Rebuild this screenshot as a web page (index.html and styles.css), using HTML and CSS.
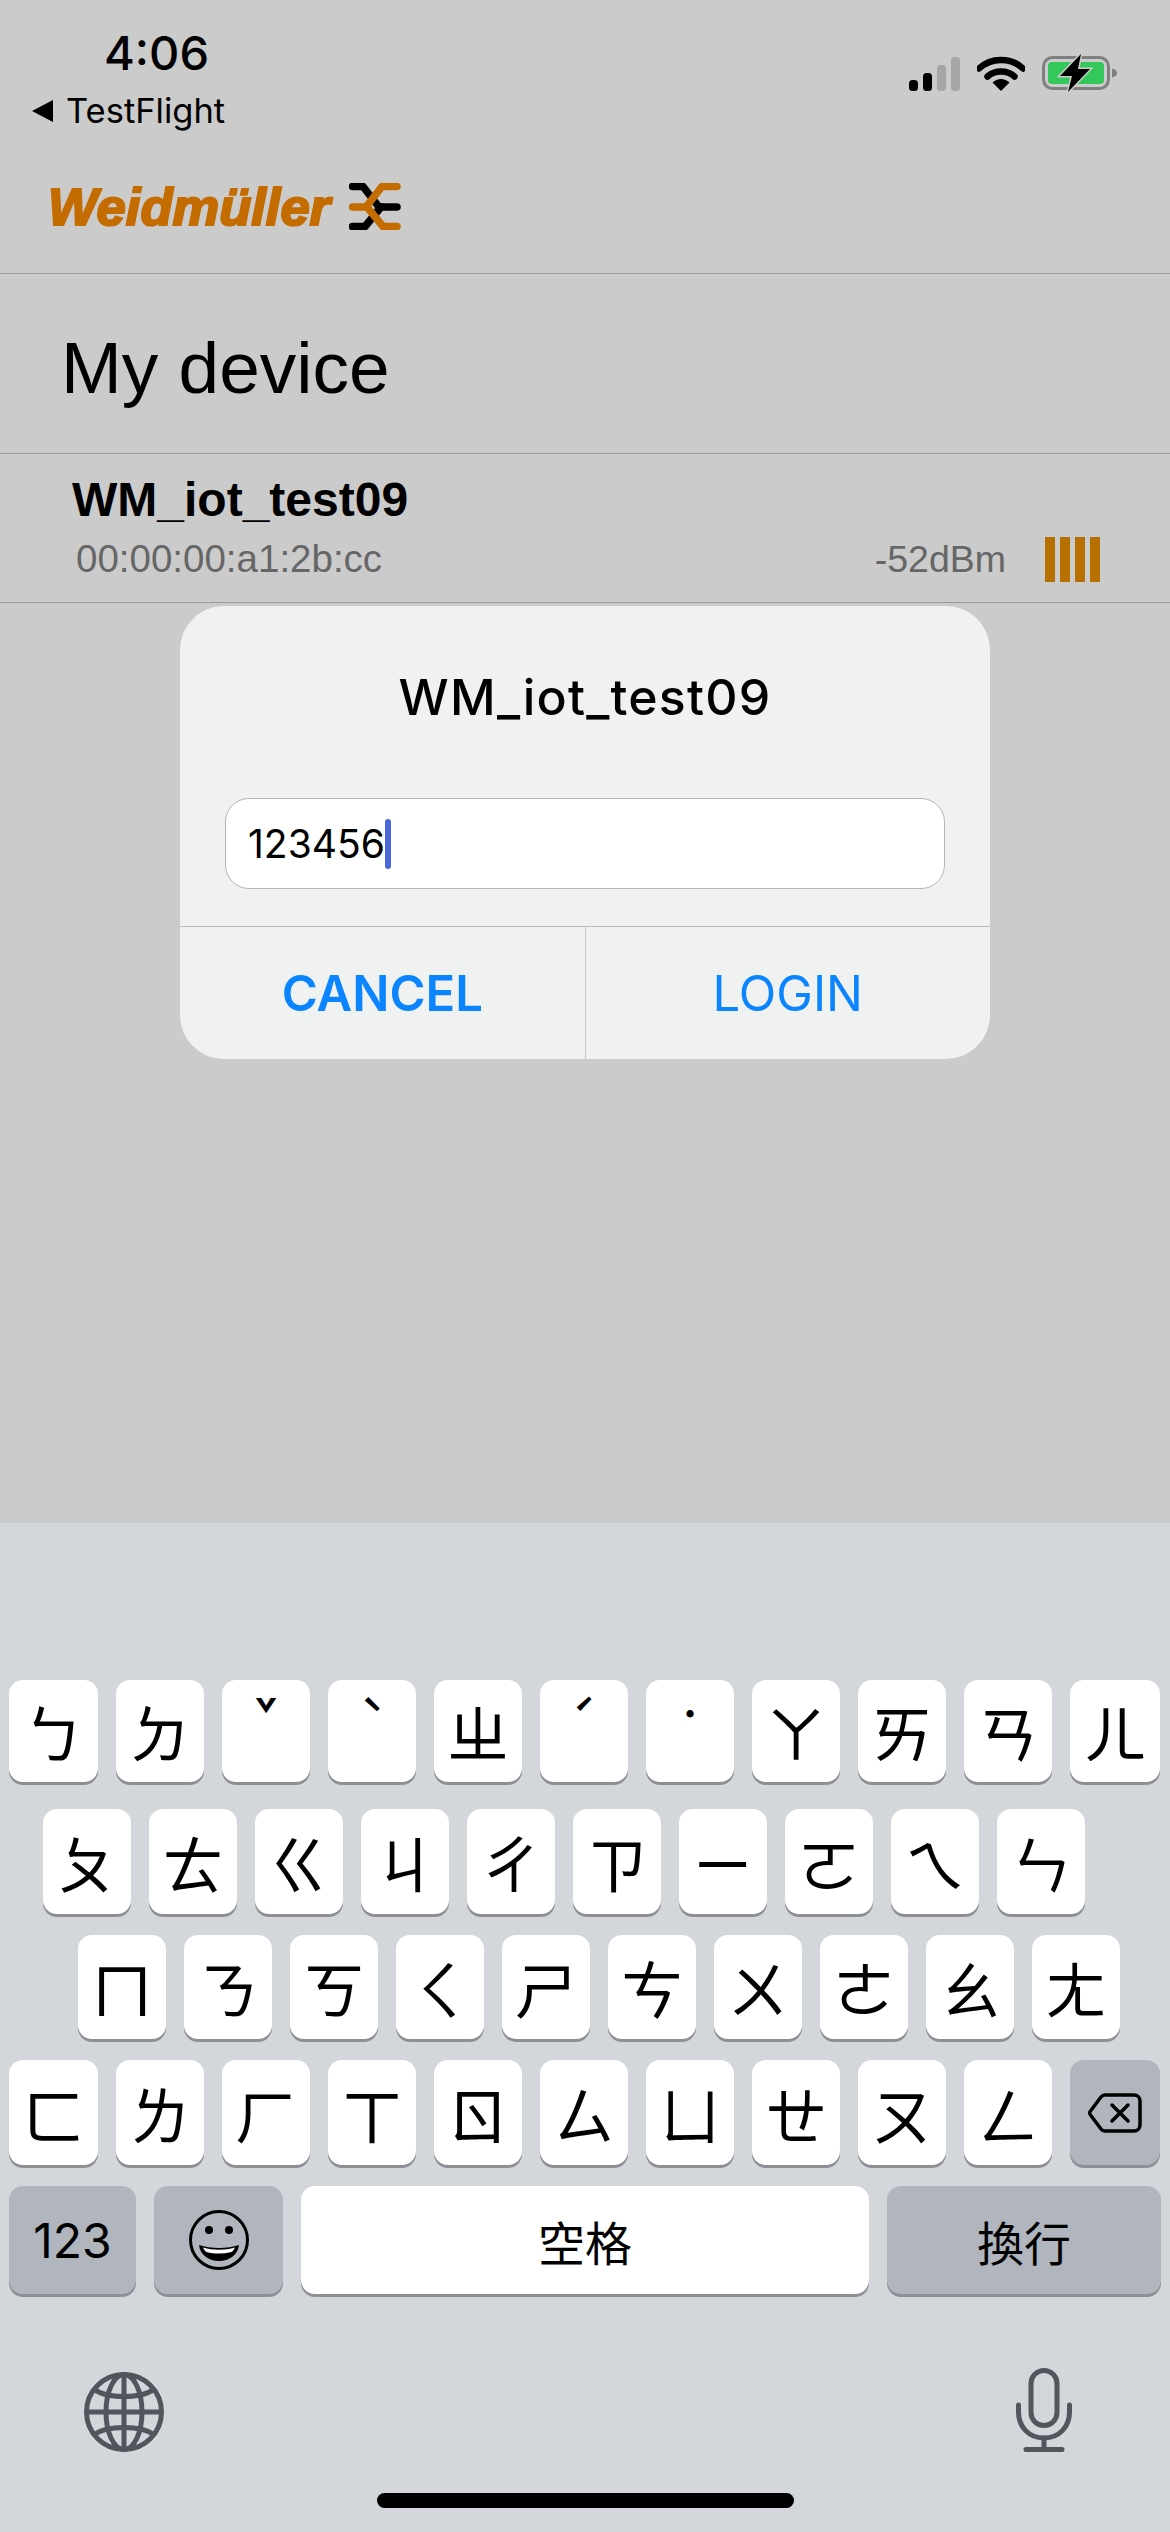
FILE: index.html
```html
<!DOCTYPE html>
<html lang="zh-Hant">
<head>
  <meta charset="UTF-8">
  <title>My device</title>
  <link rel="stylesheet" href="styles.css">
</head>
<body>

  <div class="status">
    <div class="status-left">
      <div class="time">4:06</div>
      <div class="back"><span class="back-arrow"></span>TestFlight</div>
    </div>
    <div class="status-right">
      <svg class="signal" width="51" height="34" viewBox="0 0 51 34">
        <rect x="0" y="23" width="9" height="11" rx="3.5" fill="#000"/>
        <rect x="14" y="16" width="9" height="18" rx="3.5" fill="#000"/>
        <rect x="28" y="8" width="9" height="26" rx="3.5" fill="#a6a6a6"/>
        <rect x="42" y="0" width="9" height="34" rx="3.5" fill="#a6a6a6"/>
      </svg>
      <svg class="wifi" width="48" height="36" viewBox="0 0 48 36">
        <path d="M2 13.5C14 2 34 2 46 13.5" fill="none" stroke="#000" stroke-width="6.5" stroke-linecap="round"/>
        <path d="M10.5 21.5C18 14.8 30 14.8 37.5 21.5" fill="none" stroke="#000" stroke-width="6.5" stroke-linecap="round"/>
        <path d="M15.5 27.5C20.500 22.800 27.500 22.800 32.500 27.500L24 36Z" fill="#000"/>
      </svg>
      <svg class="battery" width="76" height="38" viewBox="0 0 76 38">
        <rect x="1.500" y="3.500" width="65" height="31" rx="9" fill="none" stroke="#7f7f7f" stroke-width="3"/>
        <rect x="6" y="8" width="56" height="22" rx="4" fill="#34c759"/>
        <path d="M70 14.500C73 15 75 17 75 19C75 21 73 23 70 23.500Z" fill="#7f7f7f"/>
        <path d="M39 0L18 22H30L26 38L48 15H36Z" fill="#000" stroke="#cbcbcb" stroke-width="3" paint-order="stroke"/>
      </svg>
    </div>
  </div>

  <div class="logo-bar">
    <span class="logo-text">Weidmüller</span>
    <svg class="logo-mark" width="52" height="47" viewBox="0 0 52 47">
      <g fill="none" stroke-width="7.500" stroke-linecap="round" stroke-linejoin="round">
        <path d="M3.500 3.500H14L30 24H48" stroke="#000"/>
        <path d="M3.500 43.500H16L32 24" stroke="#000"/>
        <path d="M48 3.500H33L17 24H3.500" stroke="#c46c00"/>
        <path d="M48 43.500H34L18 24" stroke="#c46c00"/>
      </g>
    </svg>
  </div>

  <div class="page-title">My device</div>

  <div class="device-row">
    <div class="device-name">WM_iot_test09</div>
    <div class="device-info">
      <span class="device-mac">00:00:00:a1:2b:cc</span>
      <span class="device-rssi">-52dBm</span>
      <span class="bars"><i></i><i></i><i></i><i></i></span>
    </div>
  </div>

  <div class="dialog">
    <div class="dialog-title">WM_iot_test09</div>
    <div class="dialog-input">123456<span class="caret"></span></div>
    <div class="dialog-buttons">
      <div class="dialog-btn cancel">CANCEL</div>
      <div class="dialog-btn">LOGIN</div>
    </div>
  </div>

  <div class="keyboard">
    <div class="kb-row row1">
      <div class="key first">ㄅ</div><div class="key">ㄉ</div><div class="key tone">ˇ</div><div class="key tone">ˋ</div><div class="key">ㄓ</div><div class="key tone">ˊ</div><div class="key tone">˙</div><div class="key">ㄚ</div><div class="key">ㄞ</div><div class="key">ㄢ</div><div class="key last">ㄦ</div>
    </div>
    <div class="kb-row row2">
      <div class="key">ㄆ</div><div class="key">ㄊ</div><div class="key">ㄍ</div><div class="key">ㄐ</div><div class="key">ㄔ</div><div class="key">ㄗ</div><div class="key">ㄧ</div><div class="key">ㄛ</div><div class="key">ㄟ</div><div class="key">ㄣ</div>
    </div>
    <div class="kb-row row3">
      <div class="key">ㄇ</div><div class="key">ㄋ</div><div class="key">ㄎ</div><div class="key">ㄑ</div><div class="key">ㄕ</div><div class="key">ㄘ</div><div class="key">ㄨ</div><div class="key">ㄜ</div><div class="key">ㄠ</div><div class="key">ㄤ</div>
    </div>
    <div class="kb-row row4">
      <div class="key first">ㄈ</div><div class="key">ㄌ</div><div class="key">ㄏ</div><div class="key">ㄒ</div><div class="key">ㄖ</div><div class="key">ㄙ</div><div class="key">ㄩ</div><div class="key">ㄝ</div><div class="key">ㄡ</div><div class="key">ㄥ</div>
      <div class="key last dark">
        <svg width="54" height="40" viewBox="0 0 54 40">
          <path d="M17 2H46C49.500 2 52 4.500 52 8V32C52 35.500 49.500 38 46 38H17C15 38 14 37.300 13 36L2.500 22C1.500 20.800 1.500 19.200 2.500 18L13 4C14 2.700 15 2 17 2Z" fill="none" stroke="#000" stroke-width="3.500" stroke-linejoin="round"/>
          <path d="M24 12L40 28M40 12L24 28" fill="none" stroke="#000" stroke-width="3.500" stroke-linecap="round"/>
        </svg>
      </div>
    </div>
    <div class="kb-row row5">
      <div class="key dark num">123</div>
      <div class="key dark emoji">
        <svg width="60" height="60" viewBox="0 0 60 60">
          <ellipse cx="30" cy="30" rx="28.500" ry="28.500" fill="none" stroke="#000" stroke-width="3"/>
          <circle cx="20" cy="20" r="4" fill="#000"/>
          <circle cx="40" cy="20" r="4" fill="#000"/>
          <path d="M10 35C22 39 38 39 50 35C49 45 40 51 30 51C20 51 11 45 10 35Z" fill="#000"/>
          <path d="M14 37.500C24 40.500 36 40.500 46 37.500C45 39.500 44 41 42.500 42C34 44 26 44 17.500 42C16 41 15 39.500 14 37.500Z" fill="#fff"/>
        </svg>
      </div>
      <div class="key space">空格</div>
      <div class="key dark enter">換行</div>
    </div>
    <div class="kb-bottom">
      <svg width="80" height="80" viewBox="0 0 80 80">
        <g fill="none" stroke="#51555c" stroke-width="5">
          <circle cx="40" cy="40" r="37.500"/>
          <ellipse cx="40" cy="40" rx="18" ry="37.500"/>
          <path d="M40 2.500V77.500M2.500 40H77.500"/>
          <path d="M10 17C22 27 58 27 70 17M10 63C22 53 58 53 70 63"/>
        </g>
      </svg>
      <svg width="56" height="84" viewBox="0 0 56 84">
        <g fill="none" stroke="#51555c" stroke-width="5" stroke-linecap="round">
          <rect x="15" y="2.500" width="26" height="55" rx="13"/>
          <path d="M2.500 37V44C2.500 59 13 70 28 70C43 70 53.500 59 53.500 44V37"/>
          <path d="M28 70V81M10 81.500H46"/>
        </g>
      </svg>
    </div>
    <div class="home-bar"></div>
  </div>

</body>
</html>
```

FILE: styles.css
```css
* {
  box-sizing: border-box;
}
body {
  margin: 0;
  width: 1170px;
  height: 2532px;
  display: flex;
  flex-direction: column;
  position: relative;
  overflow: hidden;
  background: #cbcbcb;
  color: #000;
  font-family: "Liberation Sans", sans-serif;
}

.status {
  height: 140px;
  display: flex;
  justify-content: space-between;
  font-family: Inter, sans-serif;
}
.status-left {
  padding: 26px 0 0 32px;
}
.time {
  margin-left: 72px;
  font-size: 47px;
  font-weight: 500;
  line-height: 54px;
}
.back {
  display: flex;
  align-items: center;
  margin-top: 11px;
  font-size: 34.500px;
  line-height: 40px;
}
.back-arrow {
  width: 0;
  height: 0;
  margin-right: 13px;
  border-style: solid;
  border-width: 11px 21px 11px 0;
  border-color: transparent #000 transparent transparent;
}
.status-right {
  display: flex;
  align-items: flex-end;
  height: 92px;
  padding: 0 52px 0 0;
}
.signal {
  margin-right: 17px;
  margin-bottom: 1px;
}
.wifi {
  margin-right: 17px;
  margin-bottom: 1px;
}

.logo-bar {
  height: 134px;
  display: flex;
  align-items: center;
  gap: 19px;
  padding-left: 48px;
  border-bottom: 1px solid #9a9a9a;
}
.logo-text {
  font-size: 52.500px;
  font-weight: 700;
  font-style: italic;
  line-height: 60px;
  color: #c46c00;
  -webkit-text-stroke: 2.200px #c46c00;
}

.page-title {
  height: 180px;
  padding: 54px 0 0 61px;
  font-size: 73px;
  line-height: 80px;
  border-bottom: 1px solid #9a9a9a;
}

.device-row {
  height: 149px;
  padding: 18px 72px 0;
  border-bottom: 1px solid #9a9a9a;
}
.device-name {
  font-size: 48px;
  font-weight: 700;
  line-height: 56px;
}
.device-info {
  display: flex;
  align-items: center;
  height: 46px;
  margin-top: 8px;
  margin-right: -2px;
  padding-left: 4px;
  color: #666;
  font-size: 38.500px;
}
.device-mac {
  flex: 1;
}
.device-rssi {
  margin-right: 39px;
  font-size: 37.500px;
}
.bars {
  display: flex;
  gap: 5px;
}
.bars i {
  width: 10px;
  height: 45px;
  background: #b87000;
}

.dialog {
  position: absolute;
  top: 606px;
  left: 180px;
  width: 810px;
  height: 453px;
  background: #f0f1f1;
  border-radius: 44px;
  display: flex;
  flex-direction: column;
  font-family: Inter, sans-serif;
}
.dialog-title {
  height: 192px;
  padding-top: 61px;
  text-align: center;
  font-size: 50px;
  font-weight: 500;
  letter-spacing: 1.200px;
  line-height: 60px;
}
.dialog-input {
  height: 91px;
  margin: 0 45px;
  padding-left: 22px;
  display: flex;
  align-items: center;
  background: #fff;
  border: 1px solid #b5b5b5;
  border-radius: 24px;
  font-size: 39px;
}
.caret {
  width: 6px;
  height: 50px;
  background: #4a69d8;
  border-radius: 3px;
}
.dialog-buttons {
  flex: 1;
  display: flex;
  margin-top: 37px;
  border-top: 1px solid #bdbdbd;
}
.dialog-btn {
  flex: 1;
  display: flex;
  align-items: center;
  justify-content: center;
  color: #0a84ff;
  font-size: 49px;
}
.cancel {
  font-weight: 600;
  border-right: 1px solid #c8c8c8;
}

.keyboard {
  margin-top: auto;
  height: 1009px;
  padding-top: 157px;
  background: #d3d6db;
  font-family: "Noto Sans CJK TC", sans-serif;
}
.kb-row {
  display: flex;
  gap: 18px;
  margin-bottom: 21px;
}
.row1 {
  height: 102px;
  padding-left: 9px;
  margin-bottom: 27px;
}
.row2 {
  height: 105px;
  padding-left: 43px;
}
.row3 {
  height: 104px;
  padding-left: 78px;
}
.row4 {
  height: 105px;
  padding-left: 9px;
}
.row5 {
  height: 108px;
  padding-left: 9px;
}
.key {
  width: 88px;
  display: flex;
  align-items: center;
  justify-content: center;
  background: #fff;
  border-radius: 14px;
  box-shadow: 0 3px 0 #8e8f94;
  font-size: 62px;
}
.key.tone {
  align-items: flex-start;
  font-size: 36px;
  line-height: 36px;
  font-weight: 700;
  padding-top: 14px;
}
.key.first {
  width: 89px;
}
.key.last {
  width: 90px;
}
.key.dark {
  background: #b1b5bd;
}
.num {
  width: 127px;
  font-family: Inter, sans-serif;
  font-size: 48px;
}
.emoji {
  width: 129px;
}
.space {
  width: 568px;
  font-size: 47px;
}
.enter {
  width: 274px;
  font-size: 47px;
}
.kb-bottom {
  display: flex;
  justify-content: space-between;
  align-items: flex-end;
  height: 137px;
  padding: 0 98px 0 84px;
}
.home-bar {
  width: 417px;
  height: 15px;
  margin: 41px auto 0;
  background: #000;
  border-radius: 8px;
}
```
